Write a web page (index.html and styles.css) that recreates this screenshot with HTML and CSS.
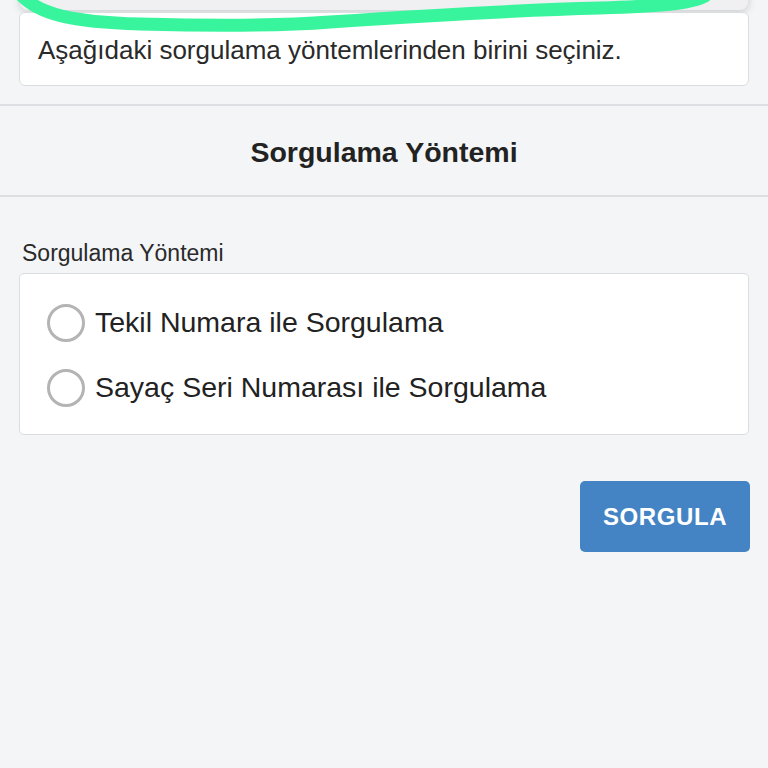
FILE: index.html
```html
<!DOCTYPE html>
<html lang="tr">
<head>
    <meta charset="UTF-8">
    <meta name="viewport" content="width=device-width, initial-scale=1.0">
    <title>Sorgulama</title>
    <link rel="stylesheet" href="styles.css">
</head>
<body>
    <div class="top-card"></div>

    <!-- hand drawn marker over the top card -->
    <svg class="scribble" width="768" height="40" viewBox="0 0 768 40">
        <path d="M22 -4 C40 14 70 22 140 24 C220 26 280 26 330 22 C420 16 520 10 600 8 C660 6 690 4 705 -4"
              fill="none" stroke="#38f59d" stroke-width="13" stroke-linecap="round"/>
    </svg>

    <div class="info-box">Aşağıdaki sorgulama yöntemlerinden birini seçiniz.</div>

    <div class="section-title">Sorgulama Yöntemi</div>

    <div class="form">
        <label class="field-label">Sorgulama Yöntemi</label>
        <div class="radio-box">
            <label class="radio-row">
                <input type="radio" name="method" value="tekil">
                <span>Tekil Numara ile Sorgulama</span>
            </label>
            <label class="radio-row">
                <input type="radio" name="method" value="sayac">
                <span>Sayaç Seri Numarası ile Sorgulama</span>
            </label>
        </div>
        <div class="actions">
            <button class="btn">SORGULA</button>
        </div>
    </div>
</body>
</html>
```

FILE: styles.css
```css
body {
    margin: 0;
    background-color: #f4f5f7;
    font-family: "Liberation Sans", Arial, sans-serif;
    color: #222;
    position: relative;
}
.top-card {
    margin: -20px 20px 0 20px;
    height: 30px;
    background-color: #f0f0f2;
    border-radius: 0 0 8px 8px;
    box-shadow: 0 2px 8px rgba(0, 0, 0, 0.18);
}
.scribble {
    position: absolute;
    top: 0;
    left: 0;
}
.info-box {
    margin: 2px 19px 0 19px;
    height: 74px;
    box-sizing: border-box;
    padding: 22px 18px 0 18px;
    background-color: #fff;
    border: 1px solid #dcdde0;
    border-radius: 6px;
    font-size: 26px;
    line-height: 30px;
    color: #2a2a2a;
}
.section-title {
    margin-top: 18px;
    border-top: 2px solid #dedfe2;
    border-bottom: 2px solid #dedfe2;
    height: 93px;
    display: flex;
    align-items: center;
    justify-content: center;
    padding-top: 4px;
    box-sizing: border-box;
    font-size: 28.5px;
    font-weight: bold;
    color: #222;
}
.form {
    padding: 42px 19px 0 19px;
}
.field-label {
    display: block;
    padding-left: 3px;
    font-size: 23px;
    line-height: 28px;
    color: #2a2a2a;
    margin-bottom: 6px;
}
.radio-box {
    background-color: #fff;
    border: 1px solid #dcdde0;
    border-radius: 5px;
    padding: 16px 0 14px 27px;
}
.radio-row {
    display: flex;
    align-items: center;
    gap: 10px;
    height: 65px;
    font-size: 28.5px;
    color: #222;
}
.radio-row input {
    appearance: none;
    margin: 0;
    width: 38px;
    height: 38px;
    border: 3px solid #b4b4b4;
    border-radius: 50%;
    box-sizing: border-box;
    background-color: #fff;
}
.actions {
    display: flex;
    justify-content: flex-end;
    margin-top: 46px;
}
.btn {
    background-color: #4484c4;
    color: #fff;
    border: none;
    border-radius: 5px;
    width: 170px;
    height: 71px;
    margin-right: -1px;
    font-family: "Liberation Sans", Arial, sans-serif;
    font-size: 24px;
    font-weight: bold;
    letter-spacing: 0.6px;
}
```
